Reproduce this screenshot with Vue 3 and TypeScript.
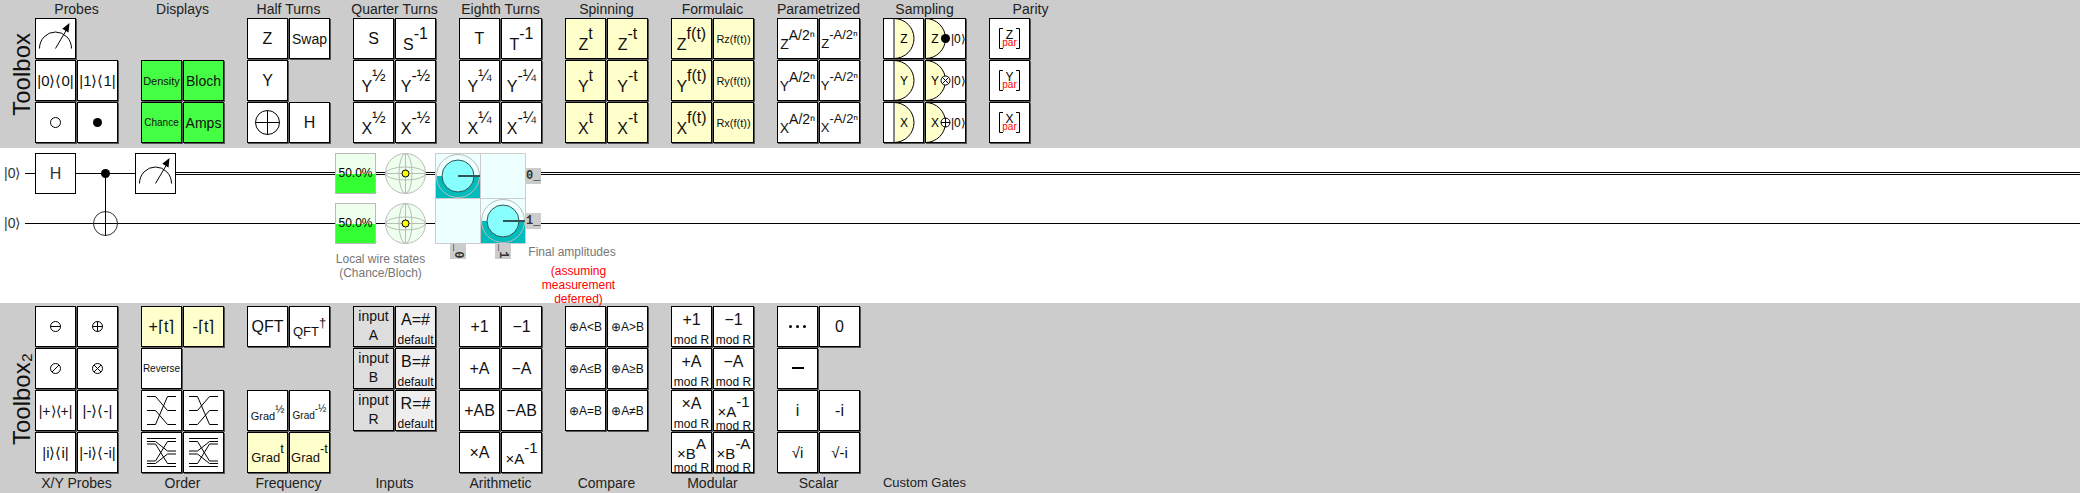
<script setup lang="ts">
interface Gate {
  text?: string
  sup?: string
  foot?: string
  icon?: string
  axis?: string
  size?: number
  tone?: 'green' | 'yellow' | 'grey' | 'light'
  name?: string
  layout?: 'input'
}

interface Group {
  title: string
  small?: boolean
  gates: (Gate | null)[]
}

const g = (text: string, size = 16, extra: Gate = {}): Gate => ({ text, size, ...extra })
const p = (text: string, sup: string, size = 16, extra: Gate = {}): Gate => ({ text, sup, size, ...extra })
const i = (icon: string, name: string, axis?: string): Gate => ({ icon, name, axis })

const yellow: Gate = { tone: 'yellow' }
const green: Gate = { tone: 'green' }
const mod: Gate = { foot: 'mod R' }

const topGroups: Group[] = [
  {
    title: 'Probes',
    gates: [i('meter', 'Measure'), null, g('|0⟩⟨0|', 15), g('|1⟩⟨1|', 15), i('open', 'Anti-control'), i('dot', 'Control')],
  },
  {
    title: 'Displays',
    gates: [null, null, g('Density', 11, green), g('Bloch', 14, green), g('Chance', 10, green), g('Amps', 14, green)],
  },
  {
    title: 'Half Turns',
    gates: [g('Z'), g('Swap', 14), g('Y'), null, i('bigplus', 'Not'), g('H')],
  },
  {
    title: 'Quarter Turns',
    gates: [g('S'), p('S', '-1'), p('Y', '½'), p('Y', '-½'), p('X', '½'), p('X', '-½')],
  },
  {
    title: 'Eighth Turns',
    gates: [g('T'), p('T', '-1'), p('Y', '¼'), p('Y', '-¼'), p('X', '¼'), p('X', '-¼')],
  },
  {
    title: 'Spinning',
    gates: ['Z', 'Y', 'X'].flatMap((a) => [p(a, 't', 16, yellow), p(a, '-t', 16, yellow)]),
  },
  {
    title: 'Formulaic',
    gates: ['Z', 'Y', 'X'].flatMap((a) => [p(a, 'f(t)', 16, yellow), g(`R${a.toLowerCase()}(f(t))`, 11, yellow)]),
  },
  {
    title: 'Parametrized',
    gates: ['Z', 'Y', 'X'].flatMap((a) => [p(a, 'A/2ⁿ', 14), p(a, '-A/2ⁿ', 13)]),
  },
  {
    title: 'Sampling',
    gates: ['Z', 'Y', 'X'].flatMap((a) => [i('sample', `${a} detector`, a), i('reset', `${a} reset`, a)]),
  },
  {
    title: 'Parity',
    gates: ['Z', 'Y', 'X'].flatMap((a) => [i('parity', `${a} parity`, a), null]),
  },
]

const bottomGroups: Group[] = [
  {
    title: 'X/Y Probes',
    gates: [
      i('minus-circle', 'X anti-control'), i('plus-circle', 'X control'),
      i('slash-circle', 'Y anti-control'), i('cross-circle', 'Y control'),
      g('|+⟩⟨+|', 14), g('|-⟩⟨-|', 15), g('|i⟩⟨i|', 15), g('|-i⟩⟨-i|', 15),
    ],
  },
  {
    title: 'Order',
    gates: [
      g('+⌈t⌉', 16, yellow), g('-⌈t⌉', 16, yellow), g('Reverse', 10), null,
      i('rotate-left', 'Rotate left'), i('rotate-right', 'Rotate right'),
      i('interleave', 'Interleave'), i('deinterleave', 'Deinterleave'),
    ],
  },
  {
    title: 'Frequency',
    gates: [
      g('QFT'), p('QFT', '†', 13), null, null,
      p('Grad', '½', 11), p('Grad', '-½', 10), p('Grad', 't', 13, yellow), p('Grad', '-t', 13, yellow),
    ],
  },
  {
    title: 'Inputs',
    gates: [
      ...['A', 'B', 'R'].flatMap((a) => [
        g('input', 14, { foot: a, tone: 'grey', layout: 'input' }),
        g(`${a}=#`, 16, { foot: 'default', tone: 'light' }),
      ]),
      null, null,
    ],
  },
  {
    title: 'Arithmetic',
    gates: [g('+1'), g('−1'), g('+A'), g('−A'), g('+AB'), g('−AB'), g('×A'), p('×A', '-1', 15)],
  },
  {
    title: 'Compare',
    gates: [
      g('⊕A<B', 12), g('⊕A>B', 12), g('⊕A≤B', 12), g('⊕A≥B', 12), g('⊕A=B', 12), g('⊕A≠B', 12), null, null,
    ],
  },
  {
    title: 'Modular',
    gates: [
      g('+1', 16, mod), g('−1', 16, mod), g('+A', 16, mod), g('−A', 16, mod),
      g('×A', 16, mod), p('×A', '-1', 15, mod), p('×B', 'A', 15, mod), p('×B', '-A', 15, mod),
    ],
  },
  {
    title: 'Scalar',
    gates: [i('dots', 'Spacer'), g('0'), i('dash', 'Negate'), null, g('i'), g('-i'), g('√i', 15), g('√-i', 15)],
  },
  { title: 'Custom Gates', small: true, gates: [] },
]

const toolboxes = [
  { id: 'top', label: 'Toolbox', groups: topGroups },
  { id: 'bottom', label: 'Toolbox₂', groups: bottomGroups },
]

const icons: Record<string, string> = {
  meter: 'M4.5 30.5a16 16.5 0 0 1 32 0M20.5 30.5L32 11',
  bigplus: 'M8.5 20.5a12 12 0 1 0 24 0a12 12 0 1 0 -24 0M8.5 20.5h24M20.5 8.5v24',
  open: 'M15.5 20.5a5 5 0 1 0 10 0a5 5 0 1 0 -10 0',
  'minus-circle': 'M15.5 20.5a5 5 0 1 0 10 0a5 5 0 1 0 -10 0M15.5 20.5h10',
  'plus-circle': 'M15.5 20.5a5 5 0 1 0 10 0a5 5 0 1 0 -10 0M15.5 20.5h10M20.5 15.5v10',
  'slash-circle': 'M15.5 20.5a5 5 0 1 0 10 0a5 5 0 1 0 -10 0M17 24l7 -7',
  'cross-circle': 'M15.5 20.5a5 5 0 1 0 10 0a5 5 0 1 0 -10 0M17 24l7 -7M17 17l7 7',
  'rotate-left': 'M6 6.5h8.5l12 14h8.5M6 20.5h8.5l12 14h8.5M6 34.5h8.5l12 -28h8.5',
  'rotate-right': 'M6 6.5h8.5l12 28h8.5M6 20.5h8.5l12 -14h8.5M6 34.5h8.5l12 -14h8.5',
  interleave:
    'M6 6.5h29M6 9.5h8.5l12 9.5h8.5M6 12h8.5l12 19.5h8.5M6 29h8.5l12 -19.5h8.5M6 31.5h8.5l12 -9.5h8.5M6 34.5h29',
  deinterleave:
    'M35 6.5h-29M35 9.5h-8.5l-12 9.5h-8.5M35 12h-8.5l-12 19.5h-8.5M35 29h-8.5l-12 -19.5h-8.5M35 31.5h-8.5l-12 -9.5h-8.5M35 34.5h-29',
  parity: 'M14 10.5h-3.5v20h3.5M27 10.5h3.5v20h-3.5',
}

const wires = [
  { y: 25, state: '0_' },
  { y: 75, state: '1_' },
]
const columns = [
  { x: 458, state: '_0' },
  { x: 503, state: '_1' },
]
const amplitudes = [
  { x: 458, y: 28, left: 436, bottom: 50 },
  { x: 503, y: 73, left: 481, bottom: 95 },
]
</script>

<template>
  <main class="app">
    <template v-for="box in toolboxes" :key="box.id">
      <section class="toolbox" :class="box.id">
        <h2 class="side"><span>{{ box.label }}</span></h2>
        <div v-for="group in box.groups" :key="group.title" class="group">
          <h3 class="title" :class="{ small: group.small }">{{ group.title }}</h3>
          <div class="cells">
            <template v-for="(gate, n) in group.gates" :key="n">
              <span v-if="!gate" class="blank"></span>
              <button
                v-else
                type="button"
                class="gate"
                :class="[gate.tone, gate.layout, { stacked: gate.foot, power: gate.sup }]"
                :aria-label="gate.name"
              >
                <svg v-if="gate.icon" class="icon" viewBox="1 1 39 39" aria-hidden="true">
                  <template v-if="gate.icon === 'sample'">
                    <path class="cup" d="M11 .5a20 20 0 0 1 0 40z" />
                    <path class="edge" d="M11.5 1v39" />
                    <text x="21" y="25" class="t12 mid">{{ gate.axis }}</text>
                  </template>
                  <template v-else-if="gate.icon === 'reset'">
                    <path class="cup" d="M.5 .5a20 20 0 0 1 0 40z" />
                    <text x="10" y="25" class="t12 mid">{{ gate.axis }}</text>
                    <circle cx="20.5" cy="20.5" r="4.5" :class="gate.axis === 'Z' ? 'solid' : 'hollow'" />
                    <path v-if="gate.axis === 'Y'" class="line" d="M17.3 17.3l6.4 6.4M17.3 23.7l6.4 -6.4" />
                    <path v-if="gate.axis === 'X'" class="line" d="M16 20.5h9M20.5 16v9" />
                    <text x="26" y="25" class="t12">|0⟩</text>
                  </template>
                  <circle v-else-if="gate.icon === 'dot'" class="solid" cx="20.5" cy="20.5" r="4.5" />
                  <template v-else-if="gate.icon === 'dots'">
                    <circle v-for="x in [13.5, 20.5, 27.5]" :key="x" class="solid" :cx="x" cy="20.5" r="1.5" />
                  </template>
                  <rect v-else-if="gate.icon === 'dash'" x="15" y="19" width="12" height="2" />
                  <path v-else class="line" :d="icons[gate.icon]" />
                  <path v-if="gate.icon === 'meter'" d="M34.5 5L33.5 14.5L27.3 10.8z" />
                  <template v-if="gate.icon === 'parity'">
                    <text x="20.5" y="21" class="t12 mid">{{ gate.axis }}</text>
                    <text x="20.5" y="28" class="t10 mid red">par</text>
                  </template>
                </svg>
                <span v-if="gate.text" class="label" :class="`f${gate.size}`"
                  >{{ gate.text }}<sup v-if="gate.sup">{{ gate.sup }}</sup></span
                >
                <span v-if="gate.foot" class="foot">{{ gate.foot }}</span>
              </button>
            </template>
          </div>
        </div>
      </section>

      <section v-if="box.id === 'top'" class="circuit">
        <svg class="diagram" role="img" aria-label="Quantum circuit">
          <rect x="25" y="25" width="110" height="1" />
          <rect x="176" y="24" width="100%" height="1" />
          <rect x="176" y="26" width="100%" height="1" />
          <rect x="25" y="75" width="100%" height="1" />

          <text v-for="w in wires" :key="w.y" x="4" :y="w.y + 5" class="t14 soft">|0⟩</text>

          <rect class="box" x="35.5" y="5.5" width="40" height="40" />
          <text x="55.5" y="31" class="t16 mid soft">H</text>

          <circle class="solid" cx="105.5" cy="25.5" r="4.5" />
          <circle class="ring" cx="105.5" cy="75.5" r="12" />
          <rect x="105" y="25" width="1" height="63" />

          <rect class="box" x="135.5" y="5.5" width="40" height="40" />
          <g transform="translate(135 5)">
            <path class="line" :d="icons.meter" />
            <path d="M34.5 5L33.5 14.5L27.3 10.8z" />
          </g>

          <g v-for="w in wires" :key="w.state">
            <rect class="pale" x="335.5" :y="w.y - 19.5" width="40" height="40" />
            <rect class="level" x="336" :y="w.y + 1" width="39" height="19" />
            <text x="355.5" :y="w.y + 4" class="t12 mid">50.0%</text>
            <circle class="pale" cx="405.5" :cy="w.y + 0.5" r="20" />
            <ellipse class="orbit" cx="405.5" :cy="w.y + 0.5" rx="6.5" ry="20" />
            <ellipse class="orbit" cx="405.5" :cy="w.y + 0.5" rx="20" ry="6.5" />
            <path class="orbit" :d="`M385.5 ${w.y + 0.5}h40M405.5 ${w.y - 19.5}v40`" />
            <circle class="state" cx="405.5" :cy="w.y + 0.5" r="3.5" />
          </g>

          <rect class="amps" x="435.5" y="5.5" width="90" height="90" />
          <path class="divider" d="M435.5 50.5h90M480.5 5.5v90M435.5 5.5h90v90h-90z" />
          <g v-for="a in amplitudes" :key="a.x">
            <rect class="water" :x="a.left" :y="a.y" width="44" :height="a.bottom - a.y" />
            <circle class="halo" :cx="a.x" :cy="a.y" r="21.5" />
            <circle class="disc" :cx="a.x" :cy="a.y" r="16" />
            <rect class="needle" :x="a.x" :y="a.y - 1" width="22" height="2" />
          </g>

          <g v-for="(w, n) in wires" :key="n">
            <rect class="tag" x="526" :y="n * 45 + 20" width="15" height="16" />
            <text class="mono" x="526" :y="n * 45 + 31">{{ w.state }}</text>
          </g>
          <g v-for="c in columns" :key="c.x">
            <rect class="tag" :x="c.x - 8" y="96" width="16" height="15" />
            <text class="mono" :transform="`translate(${c.x - 3} 96) rotate(90)`">{{ c.state }}</text>
          </g>

          <g class="t12 mid note">
            <text x="380.5" y="115">Local wire states</text>
            <text x="380.5" y="129">(Chance/Bloch)</text>
            <text x="572" y="108">Final amplitudes</text>
          </g>
          <g class="t12 mid red">
            <text x="578.5" y="127">(assuming</text>
            <text x="578.5" y="141">measurement</text>
            <text x="578.5" y="155">deferred)</text>
          </g>
        </svg>
      </section>
    </template>
  </main>
</template>

<style>
body {
  background: #ccc;
}
</style>

<style scoped>
.app {
  font-family: 'Liberation Sans', Arial, sans-serif;
  color: #000;
  overflow-x: hidden;
}
.toolbox {
  display: flex;
  background: #ccc;
}
.top {
  padding-bottom: 5px;
}
.bottom {
  padding-top: 3px;
}
.side {
  flex: none;
  display: flex;
  align-items: center;
  justify-content: center;
  box-sizing: border-box;
  width: 35px;
  margin: 0;
  padding-left: 8px;
  font-size: 24px;
  font-weight: 400;
  line-height: 27px;
  color: #111;
}
.top .side {
  padding-top: 6px;
}
.side span {
  writing-mode: vertical-rl;
  transform: rotate(180deg);
  white-space: nowrap;
}
.group {
  flex: none;
  display: flex;
  flex-direction: column;
  width: 83px;
  margin-right: 23px;
}
.bottom .group {
  flex-direction: column-reverse;
  justify-content: flex-end;
}
/* The custom gate slot has no cells, so its title drops to the title row. */
.bottom .group:last-child {
  justify-content: flex-start;
}
.bottom .cells {
  flex: 1;
}
.bottom .group:last-child .cells {
  flex: none;
}
.title {
  display: flex;
  justify-content: center;
  margin: 0;
  height: 18px;
  font-size: 14px;
  font-weight: 400;
  line-height: 19px;
  white-space: nowrap;
  color: #222;
}
.bottom .title {
  height: 20px;
  line-height: 20px;
}
.title.small {
  font-size: 13px;
}
.cells {
  display: grid;
  grid-template-columns: 41px 41px;
  grid-auto-rows: 41px;
  gap: 1px;
}
.gate {
  display: flex;
  align-items: center;
  justify-content: center;
  box-sizing: border-box;
  width: 41px;
  height: 41px;
  padding: 0;
  border: 1px solid #000;
  border-radius: 0;
  background: #fff;
  box-shadow: 1px 1px 0 #555;
  font: inherit;
  color: #111;
  cursor: grab;
}
.green {
  background: #4f4;
}
.yellow {
  background: #ffc;
}
.grey {
  background: #ddd;
}
.light {
  background: #eee;
}
.label {
  line-height: 20px;
  white-space: nowrap;
}
.label sup {
  font-size: inherit;
  line-height: 0;
  vertical-align: 11px;
}
.power {
  padding-top: 11px;
}
.label.f10 sup,
.label.f11 sup {
  vertical-align: 7px;
}
.label.f13 sup,
.label.f14 sup {
  vertical-align: 9px;
}
.stacked {
  flex-direction: column;
  justify-content: space-between;
  padding-top: 5px;
}
.stacked .label {
  line-height: 16px;
}
.stacked.power {
  padding-top: 11px;
}
.stacked.power sup {
  vertical-align: 10px;
}
.foot {
  font-size: 12px;
  line-height: 12px;
  white-space: nowrap;
}
.input {
  padding: 1px 0 3px;
}
.input .foot {
  font-size: 14px;
  line-height: 16px;
}
.f10 { font-size: 10px; }
.f11 { font-size: 11px; }
.f12 { font-size: 12px; }
.f13 { font-size: 13px; }
.f14 { font-size: 14px; }
.f15 { font-size: 15px; }
.f16 { font-size: 16px; }

.icon {
  display: block;
  width: 39px;
  height: 39px;
}
.line {
  fill: none;
  stroke: #000;
}
.solid {
  fill: #000;
}
.hollow {
  fill: #fff;
  stroke: #000;
}
.cup {
  fill: #ffc;
  stroke: #000;
}
.edge {
  stroke: #888;
}
.t10 { font-size: 10px; }
.t12 { font-size: 12px; }
.t14 { font-size: 14px; }
.t16 { font-size: 16px; }
.mid {
  text-anchor: middle;
}
.red {
  fill: #f00;
}
.note {
  fill: #777;
}
.soft {
  fill: #333;
}

.circuit {
  background: #fff;
}
.diagram {
  display: block;
  position: relative;
  width: 100%;
  height: 155px;
  overflow: visible;
}
.box {
  fill: #fff;
  stroke: #000;
}
.ring {
  fill: none;
  stroke: #333;
}
.pale {
  fill: #efe;
  stroke: #bbb;
}
.level {
  fill: #3f3;
}
.orbit {
  fill: none;
  stroke: #bbb;
}
.state {
  fill: #ff0;
  stroke: #000;
}
.amps {
  fill: #eff;
}
.water {
  fill: #0bb;
}
.halo {
  fill: none;
  stroke: #bbb;
}
.disc {
  fill: #8ff;
  stroke: #355;
}
.needle {
  fill: #355;
}
.divider {
  fill: none;
  stroke: #ccc;
}
.tag {
  fill: #ccc;
}
.mono {
  font-family: 'Liberation Mono', monospace;
  font-size: 12px;
  font-weight: 700;
  fill: #333;
}
</style>
